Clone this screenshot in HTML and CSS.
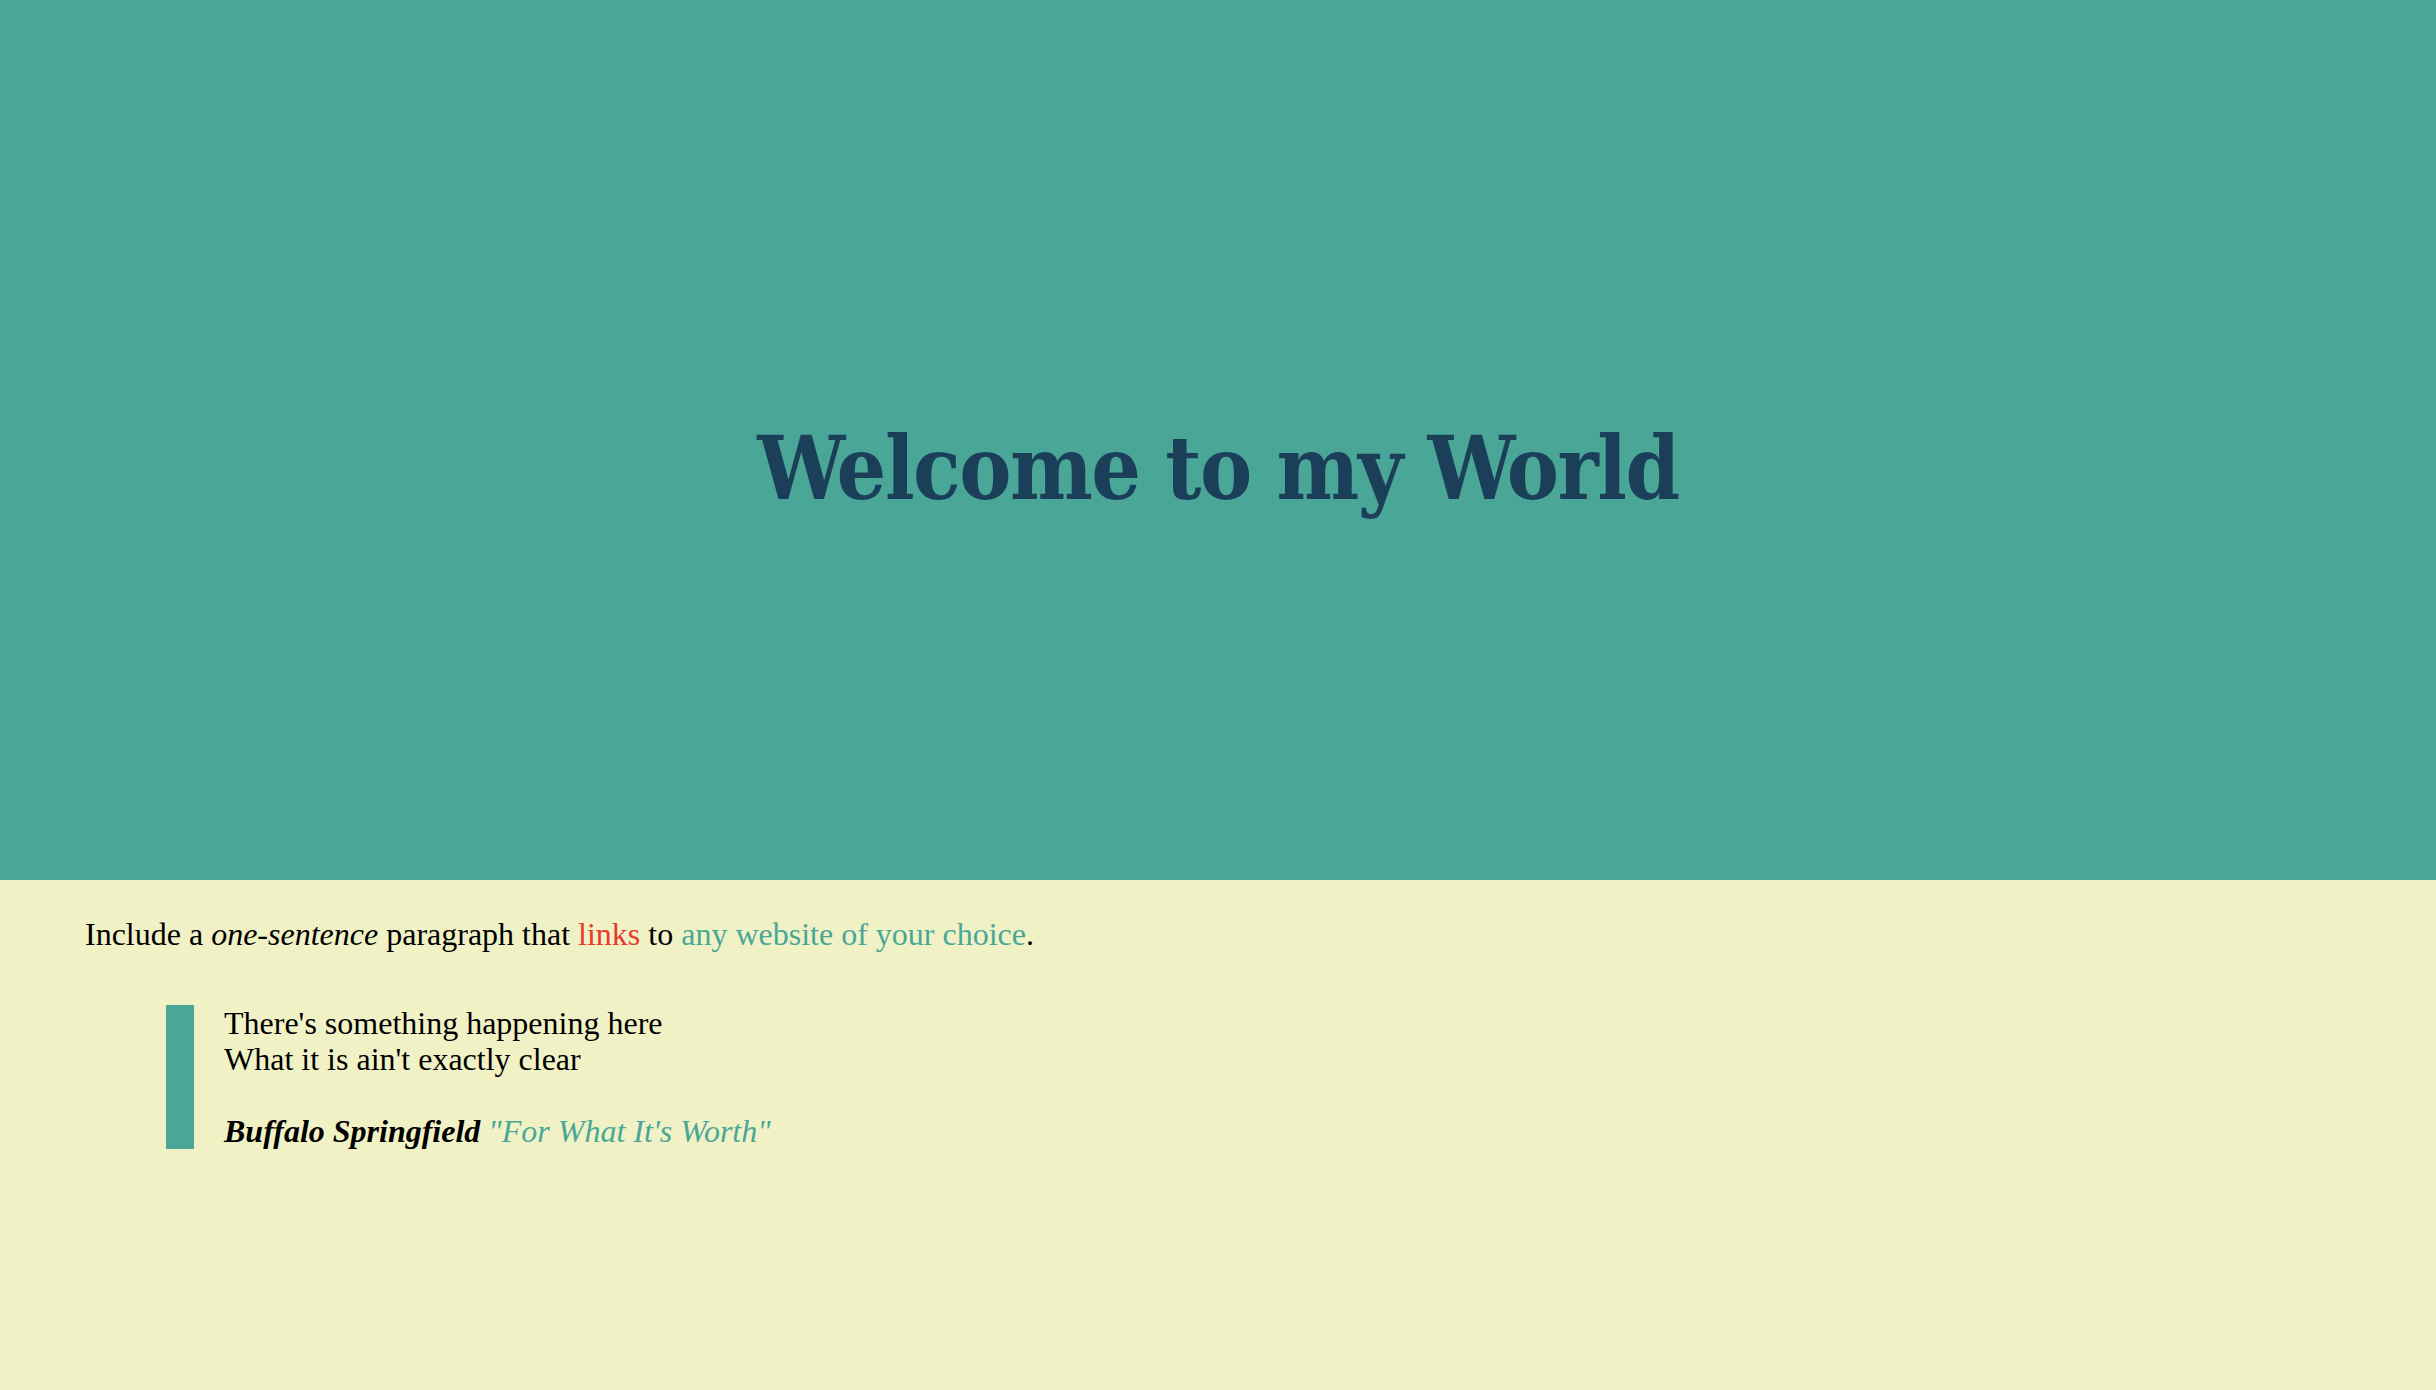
FILE: index.html
```html
<!DOCTYPE html>
<html lang="en">
<head>
<meta charset="utf-8">
<title>Welcome to my World</title>
<link rel="stylesheet" href="styles.css">
</head>
<body>
<header class="hero">
  <h1 class="hero-title">Welcome to my World</h1>
</header>
<main class="content">
  <p class="intro">Include a <em>one-sentence</em> paragraph that <a class="link-red" href="#">links</a> to <a class="link-teal" href="#">any website of your choice</a>.</p>
  <blockquote class="quote">
    <p class="quote-text">There's something happening here<br>What it is ain't exactly clear</p>
    <p class="quote-cite"><strong>Buffalo Springfield</strong> <span class="song">"For What It's Worth"</span></p>
  </blockquote>
</main>
</body>
</html>
```

FILE: styles.css
```css
html, body {
  margin: 0;
  padding: 0;
}
body {
  background: #f0f2c6;
  font-family: "Liberation Serif", "Times New Roman", serif;
  font-size: 32px;
  color: #000;
  min-height: 1390px;
}
.hero {
  background: #4aa798;
  height: 880px;
  display: flex;
  align-items: center;
  justify-content: center;
}
.hero-title {
  margin: 0;
  padding-top: 56px;
  font-family: "DejaVu Serif Condensed", "DejaVu Serif", serif;
  font-weight: 900;
  font-size: 87px;
  letter-spacing: -1.5px;
  color: #1b3f58;
  line-height: 1;
}
.content {
  padding: 36px 85px 0 85px;
}
.intro {
  margin: 0;
  line-height: 36px;
}
.intro em {
  font-style: italic;
}
.link-red {
  color: #e8392b;
  text-decoration: none;
}
.link-teal {
  color: #4aa798;
  text-decoration: none;
}
.quote {
  margin: 53px 0 0 81px;
  border-left: 28px solid #4aa798;
  padding-left: 30px;
  line-height: 36px;
}
.quote-text {
  margin: 0 0 36px 0;
}
.quote-cite {
  margin: 0;
  font-style: italic;
}
.song {
  color: #4aa798;
}
```
